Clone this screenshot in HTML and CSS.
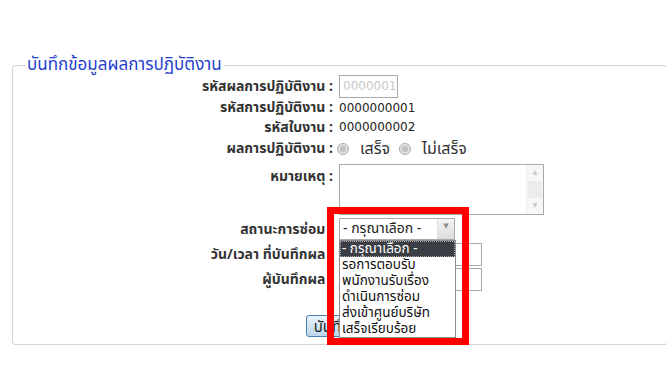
FILE: index.html
```html
<!DOCTYPE html>
<html lang="th">
<head>
    <meta charset="UTF-8">
    <title>บันทึกข้อมูลผลการปฏิบัติงาน</title>
    <link rel="stylesheet" href="styles.css">
</head>
<body>
    <fieldset class="panel">
        <legend>บันทึกข้อมูลผลการปฏิบัติงาน</legend>

        <div class="form">
            <label class="lbl">รหัสผลการปฏิบัติงาน :</label>
            <div class="fld"><span class="input short">0000001</span></div>

            <label class="lbl">รหัสการปฏิบัติงาน :</label>
            <div class="fld value">0000000001</div>

            <label class="lbl">รหัสใบงาน :</label>
            <div class="fld value">0000000002</div>

            <label class="lbl">ผลการปฏิบัติงาน :</label>
            <div class="fld choice">
                <span class="radio"></span><span class="opt">เสร็จ</span>
                <span class="radio"></span><span class="opt">ไม่เสร็จ</span>
            </div>

            <label class="lbl top">หมายเหตุ :</label>
            <div class="fld">
                <div class="memo">
                    <div class="memo-text"></div>
                    <div class="scroll">
                        <span class="arr">▲</span>
                        <span class="thumb"></span>
                        <span class="arr">▼</span>
                    </div>
                </div>
            </div>

            <label class="lbl">สถานะการซ่อม :</label>
            <div class="fld">
                <div class="select">
                    <span class="sel-text">- กรุณาเลือก -</span>
                    <span class="sel-btn">▼</span>
                    <ul class="options">
                        <li class="active">- กรุณาเลือก -</li>
                        <li>รอการตอบรับ</li>
                        <li>พนักงานรับเรื่อง</li>
                        <li>ดำเนินการซ่อม</li>
                        <li>ส่งเข้าศูนย์บริษัท</li>
                        <li>เสร็จเรียบร้อย</li>
                    </ul>
                    <div class="mark"></div>
                </div>
            </div>

            <label class="lbl">วัน/เวลา ที่บันทึกผล :</label>
            <div class="fld"><span class="input mid"></span></div>

            <label class="lbl">ผู้บันทึกผล :</label>
            <div class="fld"><span class="input mid"></span></div>
        </div>

        <div class="actions">
            <button class="btn">บันทึก</button>
        </div>
    </fieldset>
</body>
</html>
```

FILE: styles.css
```css
* { margin: 0; padding: 0; box-sizing: border-box; }
body {
    background: #fff;
    font-family: Tahoma, "Noto Sans Thai", "Noto Sans", "DejaVu Sans", sans-serif;
    font-size: 14px;
    color: #333;
    width: 667px;
    height: 385px;
    overflow: hidden;
}
.panel {
    margin: 56px 0 0 12px;
    width: 656px;
    border: 1px solid #d4d4d4;
    border-right-color: transparent;
    border-radius: 4px;
    padding: 0 0 6px 0;
}
.panel legend {
    margin-left: 12px;
    padding: 0 2px;
    color: #1f3fcc;
    font-size: 17px;
    line-height: 18px;
}
.form {
    display: grid;
    grid-template-columns: 320px 1fr;
    grid-template-rows: 24px 19px 20px 23px 56px 26px 25px 25px;
    column-gap: 6px;
}
.lbl {
    font-weight: bold;
    text-align: right;
    align-self: center;
    white-space: nowrap;
}
.lbl.top { align-self: start; padding-top: 6px; }
.fld { display: flex; align-items: center; }
.value { font-family: "DejaVu Sans", sans-serif; font-size: 12px; color: #222; }
.input {
    display: inline-block;
    height: 23px;
    border: 1px solid #a9a9a9;
    font-family: "DejaVu Sans", sans-serif;
    font-size: 12px;
    line-height: 21px;
    padding-left: 3px;
    color: #c8c8c8;
}
.input.short { width: 59px; }
.input.mid { width: 143px; height: 23px; }
.choice { font-size: 16px; }
.radio {
    width: 12px;
    height: 12px;
    border-radius: 50%;
    border: 1px solid #a8a8a8;
    background: radial-gradient(circle, #c4c4c4 0 3px, #e8e8e8 4px);
    margin: 0 11px 0 -2px;
}
.opt { margin-right: 11px; color: #333; }
.memo {
    display: flex;
    width: 205px;
    height: 51px;
    margin-top: 4px;
    border: 1px solid #a9a9a9;
    align-self: flex-start;
}
.memo-text { flex: 1; }
.scroll {
    width: 17px;
    display: flex;
    flex-direction: column;
    background: #f7f7f7;
    border-left: 1px solid #f0f0f0;
}
.arr { height: 16px; font-size: 6px; color: #c8c8c8; text-align: center; line-height: 16px; }
.thumb { flex: 1; background: #ececec; margin: 0 1px; }
.select {
    position: relative;
    display: flex;
    width: 116px;
    height: 22px;
    border: 1px solid #a9a9a9;
    background: #fff;
}
.sel-text { flex: 1; font-size: 14px; line-height: 20px; padding-left: 3px; color: #222; }
.sel-btn {
    width: 17px;
    background: linear-gradient(#f4f4f4, #dcdcdc);
    border-left: 1px solid #e0e0e0;
    font-size: 7px;
    color: #8a8a8a;
    text-align: center;
    line-height: 14px;
}
.options {
    position: absolute;
    left: -1px;
    top: 21px;
    width: 117px;
    list-style: none;
    background: #fff;
    border: 1px solid #8c8c8c;
    z-index: 2;
}
.options li {
    height: 16px;
    font-size: 13.5px;
    line-height: 16px;
    padding-left: 2px;
    color: #111;
    white-space: nowrap;
}
.options li.active {
    background: #3b3e44;
    color: #fff;
    outline: 1px dotted #aaa;
    outline-offset: -1px;
}
.mark {
    position: absolute;
    left: -13px;
    top: -12px;
    width: 142px;
    height: 138px;
    border: 7px solid #ff0000;
    z-index: 3;
}
.actions { padding: 23px 0 0 293px; }
.btn {
    height: 22px;
    width: 52px;
    border: 1px solid #4a7fb8;
    border-radius: 3px;
    background: linear-gradient(#eaf4fc, #b9d6ee);
    font-family: inherit;
    font-size: 15px;
    color: #222;
}
```
